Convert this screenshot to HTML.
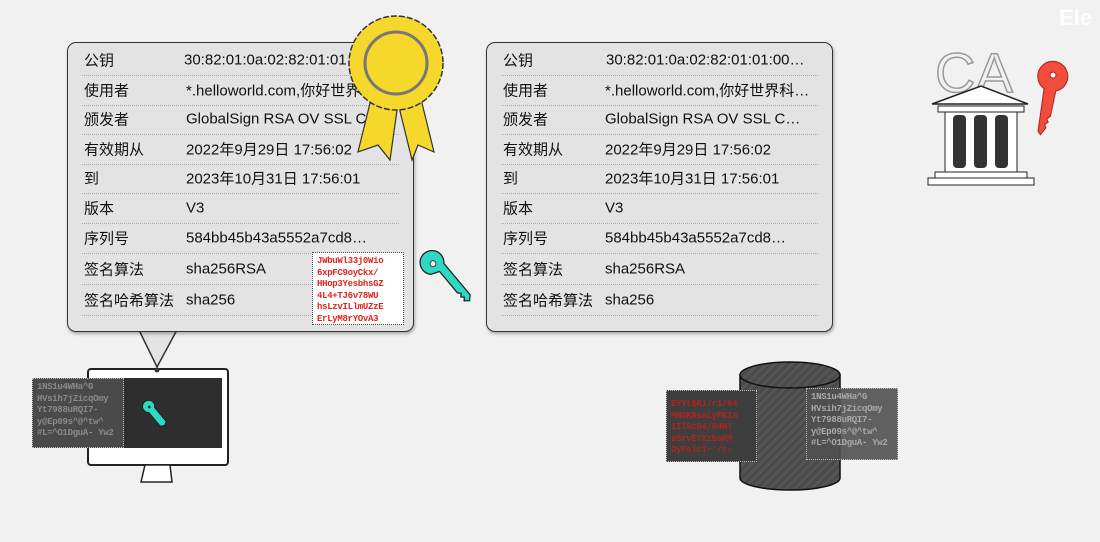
<!DOCTYPE html>
<html><head><meta charset="utf-8"><style>
body{margin:0;width:1100px;height:542px;overflow:hidden;background:#f1f1f1;position:relative;font-family:"Liberation Sans","Noto Sans CJK SC",sans-serif;}
.panel{position:absolute;top:42px;width:345px;height:288px;background:#e3e3e3;border:1.5px solid #333;border-radius:9px;box-shadow:1px 2px 3px rgba(0,0,0,.3);}
.row{position:absolute;left:14px;right:14px;height:30px;border-bottom:1px dotted #aaa;font-size:15px;color:#111;}
.row span{position:absolute;top:50%;transform:translateY(-50%);white-space:nowrap}
.l{left:2px}.v{left:104px}
.code{position:absolute;font-family:"Liberation Mono",monospace;font-weight:bold;font-size:9px;line-height:11.5px;border:1px dotted #ddd;padding:3px 4px;box-sizing:border-box;overflow:hidden;letter-spacing:-0.3px}
</style></head><body>
<div style="position:absolute;right:8px;top:5px;color:#fff;font-size:22px;font-weight:bold;opacity:.9">Ele</div>

<svg style="position:absolute;left:0;top:0" width="1100" height="542">
<polygon points="138,328 178,328 157,367" fill="#e3e3e3" stroke="#333" stroke-width="1.5"/>
</svg>

<div class="panel" style="left:67px">
 <div class="row" style="top:2px"><span class="l">公钥</span><span class="v" style="left:102px">30:82:01:0a:02:82:01:01</span></div>
 <div class="row" style="top:32px"><span class="l">使用者</span><span class="v">*.helloworld.com,你好世界</span></div>
 <div class="row" style="top:61px"><span class="l">颁发者</span><span class="v">GlobalSign RSA OV SSL C</span></div>
 <div class="row" style="top:91px"><span class="l">有效期从</span><span class="v">2022年9月29日 17:56:02</span></div>
 <div class="row" style="top:120px"><span class="l">到</span><span class="v">2023年10月31日 17:56:01</span></div>
 <div class="row" style="top:150px"><span class="l">版本</span><span class="v">V3</span></div>
 <div class="row" style="top:180px"><span class="l">序列号</span><span class="v">584bb45b43a5552a7cd8…</span></div>
 <div class="row" style="top:211px"><span class="l">签名算法</span><span class="v">sha256RSA</span></div>
 <div class="row" style="top:242px"><span class="l">签名哈希算法</span><span class="v">sha256</span></div>
 <div class="code" style="left:244px;top:209px;width:92px;height:73px;background:#fff;color:#e0231b;border-color:#444">JWbuWl33j0Wio 6xpFC9oyCkx/ HHop3YesbhsGZ 4L4+TJ6v78WU hsLzvILlmUZzE ErLyM8rYOvA3</div>
</div>

<div class="panel" style="left:486px">
 <div class="row" style="top:2px"><span class="l">公钥</span><span class="v" style="left:105px">30:82:01:0a:02:82:01:01:00…</span></div>
 <div class="row" style="top:32px"><span class="l">使用者</span><span class="v">*.helloworld.com,你好世界科…</span></div>
 <div class="row" style="top:61px"><span class="l">颁发者</span><span class="v">GlobalSign RSA OV SSL C…</span></div>
 <div class="row" style="top:91px"><span class="l">有效期从</span><span class="v">2022年9月29日 17:56:02</span></div>
 <div class="row" style="top:120px"><span class="l">到</span><span class="v">2023年10月31日 17:56:01</span></div>
 <div class="row" style="top:150px"><span class="l">版本</span><span class="v">V3</span></div>
 <div class="row" style="top:180px"><span class="l">序列号</span><span class="v">584bb45b43a5552a7cd8…</span></div>
 <div class="row" style="top:211px"><span class="l">签名算法</span><span class="v">sha256RSA</span></div>
 <div class="row" style="top:242px"><span class="l">签名哈希算法</span><span class="v">sha256</span></div>
</div>

<svg style="position:absolute;left:0;top:0" width="1100" height="542">
 <!-- rosette -->
 <polygon points="372,95 358,152 378,145 390,160 398,103" fill="#f6d82c" stroke="#333" stroke-width="1.2"/>
 <polygon points="398,103 412,160 418,145 434,152 420,95" fill="#f6d82c" stroke="#333" stroke-width="1.2"/>
 <circle cx="396" cy="63" r="47" fill="#f6d82c" stroke="#333" stroke-width="1.5" stroke-dasharray="6 2"/>
 <circle cx="396" cy="63" r="31" fill="#f6d82c" stroke="#777" stroke-width="3"/>
 <!-- teal key -->
 <g transform="translate(445,278) rotate(-40) scale(0.85)">
  <path d="M-10,-14 a14,14 0 1,1 20,0 l0,48 l-5,5 l-5,-4 l3,-3 l-3,-3 l3,-3 l-3,-3 l0,-33 z" fill="#2fd9c1" stroke="#222" stroke-width="1.5"/>
  <circle cx="0" cy="-22" r="3.5" fill="#f1f1f1" stroke="#222"/>
 </g>
 <!-- monitor -->
 <rect x="88" y="369" width="140" height="96" rx="3" fill="#fff" stroke="#222" stroke-width="2"/>
 <rect x="102" y="378" width="120" height="70" fill="#2e2e2e"/>
 <polygon points="145,465 170,465 172,482 141,482" fill="#fff" stroke="#222" stroke-width="1.5"/>
 <circle cx="157" cy="370" r="2.5" fill="#333"/>
 <g transform="translate(155,414) rotate(-40) scale(0.75)">
  <path d="M-5,-7 a8,8 0 1,1 10,0 l0,24 l-5,3 l-5,-3 z" fill="#2fd9c1" stroke="#111"/>
  <circle cx="0" cy="-12" r="1.8" fill="#222"/>
 </g>
 <!-- cylinder -->
 <defs><pattern id="st" width="6" height="6" patternUnits="userSpaceOnUse" patternTransform="rotate(45)"><rect width="6" height="6" fill="#4a4a4a"/><rect width="3" height="6" fill="#555"/></pattern></defs>
 <path d="M740,375 L740,478 A50,12 0 0,0 840,478 L840,375 Z" fill="url(#st)" stroke="#111" stroke-width="1.5"/>
 <ellipse cx="790" cy="375" rx="50" ry="13" fill="url(#st)" stroke="#111" stroke-width="1.5"/>
 <!-- CA -->
 <text x="935" y="92" font-family="Liberation Sans,sans-serif" font-size="56" fill="none" stroke="#999" stroke-width="1.5">CA</text>
 <polygon points="932,104 981,86 1028,104" fill="#fff" stroke="#222" stroke-width="1.5"/>
 <rect x="938" y="106" width="86" height="6" fill="#fff" stroke="#222"/>
 <rect x="945" y="112" width="72" height="60" fill="#fff" stroke="#222"/>
 <rect x="953" y="115" width="13" height="53" rx="4" fill="#333"/>
 <rect x="974" y="115" width="13" height="53" rx="4" fill="#333"/>
 <rect x="995" y="115" width="13" height="53" rx="4" fill="#333"/>
 <rect x="935" y="172" width="92" height="6" fill="#fff" stroke="#222"/>
 <rect x="928" y="178" width="106" height="7" fill="#fff" stroke="#222"/>
 <g transform="translate(1052,80) rotate(12)">
  <path d="M-6,10 a15,15 0 1,1 12,0 l0,26 l-3,3 l2,3 l-3,3 l2,3 l-4,8 l-3,-3 z" fill="#f24c3c" stroke="#a22" stroke-width="1"/>
  <circle cx="0" cy="-5" r="3" fill="#fff" stroke="#a22"/>
 </g>
</svg>

<div class="code" style="left:32px;top:378px;width:92px;height:70px;background:#4a4a4a;color:#8a8a8a;border-color:#bbb">1NS1u4WHa^G HVsih7jZicqOmy Yt7988uRQI7- y@Ep09s^@^tw^ #L=^O1DguA- Yw2</div>
<div class="code" style="left:666px;top:390px;width:91px;height:72px;background:#3e3e3e;color:#b22420;border-color:#bbb;padding-top:8px">EYYt6Ki/r1/04 MHGKRsaLyFKIa 1Il9cD4/94H! eSrvEYXzbaKM DyFslcT~'/t-</div>
<div class="code" style="left:806px;top:388px;width:92px;height:72px;background:rgba(80,80,80,.9);color:#a8a8a8;border-color:#bbb">1NS1u4WHa^G HVsih7jZicqOmy Yt7988uRQI7- y@Ep09s^@^tw^ #L=^O1DguA- Yw2</div>
</body></html>
